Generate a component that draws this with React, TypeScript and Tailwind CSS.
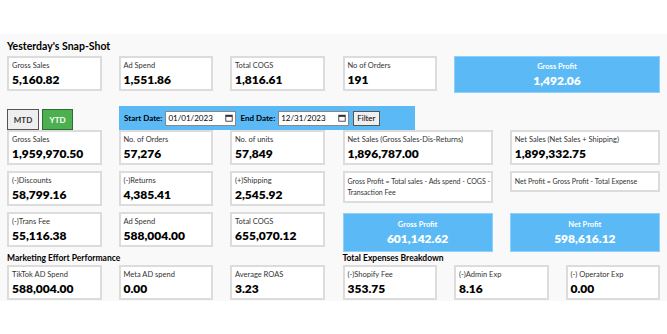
import React from 'react';

const font = { fontFamily: 'Lato, "Noto Sans", sans-serif' };

const Card = ({ label, value }: { label: string; value: string }) => (
  <div className="h-[35px] border-2 border-[#dcdcdc] bg-white px-[3px] pt-[3px]">
    <div className="text-[7.5px] leading-[10px] text-[#333]">{label}</div>
    <div className="text-[12px] leading-[17px] font-extrabold text-black">{value}</div>
  </div>
);

const BlueCard = ({ label, value, h }: { label: string; value: string; h: string }) => (
  <div className={`${h} bg-[#5bbaf6] border border-[#8ed0fa] flex flex-col items-center justify-center text-white`}>
    <div className="text-[7.5px] leading-[11px] font-bold">{label}</div>
    <div className="text-[12px] leading-[17px] font-extrabold">{value}</div>
  </div>
);

const Note = ({ children }: { children: React.ReactNode }) => (
  <div className="border-2 border-[#dcdcdc] bg-white px-[3px] py-[3px] text-[7px] leading-[11px] text-[#333] whitespace-nowrap overflow-hidden">
    {children}
  </div>
);

const Calendar = () => (
  <svg width="8" height="8" viewBox="0 0 10 10" className="shrink-0">
    <rect x="1" y="1.5" width="8" height="7.5" fill="none" stroke="#222" strokeWidth="1" />
    <rect x="1" y="1.5" width="8" height="2" fill="#222" />
  </svg>
);

const DateBox = ({ value }: { value: string }) => (
  <div className="w-[71px] h-[15px] bg-white border border-[#888] flex items-center justify-between px-[2px] text-[8px] text-black">
    <span>{value}</span>
    <Calendar />
  </div>
);

export default function App() {
  return (
    <div className="w-[667px] h-[334px] bg-white overflow-hidden" style={font}>
      <div className="mt-[34px] bg-[#f9f9f9] px-[7px] pt-[5px] pb-[1px]">
        <div className="text-[10.5px] leading-[14px] font-bold text-black">Yesterday's Snap-Shot</div>

        <div className="mt-[3px] grid grid-cols-2 gap-x-[18px] items-start">
          <div className="grid grid-cols-3 gap-x-[17px]">
            <Card label="Gross Sales" value="5,160.82" />
            <Card label="Ad Spend" value="1,551.86" />
            <Card label="Total COGS" value="1,816.61" />
          </div>
          <div className="grid grid-cols-3 gap-x-[17px] items-start">
            <Card label="No of Orders" value="191" />
            <div className="col-span-2">
              <BlueCard label="Gross Profit" value="1,492.06" h="h-[37px]" />
            </div>
          </div>
        </div>

        <div className="mt-[13px] flex items-end h-[24px]">
          <div className="w-[112px] flex gap-[3px] items-end">
            <button className="w-[32px] h-[21px] bg-[#eeeeee] border border-[#555] text-[8px] font-bold text-[#333]">MTD</button>
            <button className="w-[31px] h-[21px] bg-[#4caf50] border border-[#2f6b32] text-[8px] font-bold text-white">YTD</button>
          </div>
          <div className="w-[296px] h-[24px] bg-[#5bbaf6] flex items-center pl-[5px] gap-[3px]">
            <span className="text-[8px] font-bold text-black">Start Date:</span>
            <DateBox value="01/01/2023" />
            <span className="ml-[1px] text-[8px] font-bold text-black">End Date:</span>
            <DateBox value="12/31/2023" />
            <button className="ml-[1px] h-[15px] px-[3px] bg-[#efefef] border border-[#555] text-[8px] text-black">Filter</button>
          </div>
        </div>

        <div className="grid grid-cols-2 gap-x-[18px] items-start">
          <div className="flex flex-col gap-[6px]">
            <div className="grid grid-cols-3 gap-x-[17px]">
              <Card label="Gross Sales" value="1,959,970.50" />
              <Card label="No. of Orders" value="57,276" />
              <Card label="No. of units" value="57,849" />
            </div>
            <div className="grid grid-cols-3 gap-x-[17px]">
              <Card label="(-)Discounts" value="58,799.16" />
              <Card label="(-)Returns" value="4,385.41" />
              <Card label="(+)Shipping" value="2,545.92" />
            </div>
            <div className="grid grid-cols-3 gap-x-[17px]">
              <Card label="(-)Trans Fee" value="55,116.38" />
              <Card label="Ad Spend" value="588,004.00" />
              <Card label="Total COGS" value="655,070.12" />
            </div>
          </div>
          <div className="flex flex-col">
            <div className="grid grid-cols-2 gap-x-[17px]">
              <Card label="Net Sales (Gross Sales-Dis-Returns)" value="1,896,787.00" />
              <Card label="Net Sales (Net Sales + Shipping)" value="1,899,332.75" />
            </div>
            <div className="mt-[6px] grid grid-cols-2 gap-x-[17px] items-start">
              <Note>
                Gross Profit = Total sales - Ads spend - COGS -
                <br />
                Transaction Fee
              </Note>
              <Note>Net Profit = Gross Profit - Total Expense</Note>
            </div>
            <div className="mt-[10px] grid grid-cols-2 gap-x-[17px]">
              <BlueCard label="Gross Profit" value="601,142.62" h="h-[39px]" />
              <BlueCard label="Net Profit" value="598,616.12" h="h-[39px]" />
            </div>
          </div>
        </div>

        <div className="grid grid-cols-2 gap-x-[18px]">
          <div>
            <div className="text-[8.5px] leading-[13px] font-bold text-black">Marketing Effort Performance</div>
            <div className="grid grid-cols-3 gap-x-[17px]">
              <Card label="TikTok AD Spend" value="588,004.00" />
              <Card label="Meta AD spend" value="0.00" />
              <Card label="Average ROAS" value="3.23" />
            </div>
          </div>
          <div>
            <div className="text-[8.5px] leading-[13px] font-bold text-black">Total Expenses Breakdown</div>
            <div className="grid grid-cols-3 gap-x-[17px]">
              <Card label="(-)Shopify Fee" value="353.75" />
              <Card label="(-)Admin Exp" value="8.16" />
              <Card label="(-) Operator Exp" value="0.00" />
            </div>
          </div>
        </div>
      </div>
    </div>
  );
}
